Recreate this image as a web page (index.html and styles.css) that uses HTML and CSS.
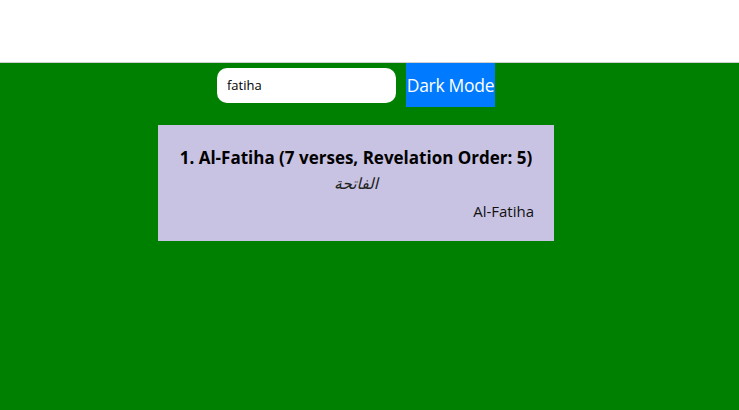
FILE: index.html
```html
<!DOCTYPE html>
<html>
<head>
<meta charset="utf-8">
<link rel="stylesheet" href="styles.css">
</head>
<body>
<header class="top"></header>
<main class="app">
  <div class="wrap">
    <div class="controls">
      <input class="search" type="text" value="fatiha">
      <button class="mode">Dark Mode</button>
    </div>
    <div class="card">
      <h2 class="title">1. Al-Fatiha (7 verses, Revelation Order: 5)</h2>
      <p class="arabic" dir="rtl">الفاتحة</p>
      <p class="english">Al-Fatiha</p>
    </div>
  </div>
</main>
</body>
</html>
```
FILE: styles.css
```css
html, body {
  margin: 0;
  padding: 0;
  height: 100%;
}
body {
  font-family: "Open Sans", "Noto Sans", sans-serif;
  background: #008000;
  display: flex;
  flex-direction: column;
}
.top {
  height: 62px;
  background: #ffffff;
  border-bottom: 1px solid #d0d0d0;
  flex: none;
}
.app {
  flex: 1;
}
.wrap {
  width: 712px;
  display: flex;
  flex-direction: column;
  align-items: center;
}
.controls {
  display: flex;
  align-items: center;
  gap: 10px;
}
.search {
  width: 179px;
  height: 35px;
  box-sizing: border-box;
  border: none;
  border-radius: 10px;
  padding: 0 10px;
  font-family: "Open Sans", sans-serif;
  font-size: 13px;
  color: #000;
  background: #fff;
  outline: none;
}
.mode {
  height: 44px;
  width: 89px;
  padding: 0;
  border: none;
  background: #007bff;
  color: #fff;
  font-family: "Open Sans", sans-serif;
  font-size: 17.5px;
  letter-spacing: -0.3px;
  white-space: nowrap;
}
.card {
  margin-top: 18px;
  width: 396px;
  height: 116px;
  box-sizing: border-box;
  background: #c9c3e3;
  padding: 20px 20px 0;
  text-align: center;
}
.title {
  margin: 0;
  font-size: 17px;
  font-weight: 700;
  line-height: 26px;
  color: #000;
}
.arabic {
  margin: 0;
  font-family: "DejaVu Sans", sans-serif;
  font-style: italic;
  font-size: 15.5px;
  line-height: 27px;
  color: #222;
}
.english {
  margin: 0;
  text-align: right;
  font-size: 15px;
  line-height: 26px;
  color: #111;
}
```
